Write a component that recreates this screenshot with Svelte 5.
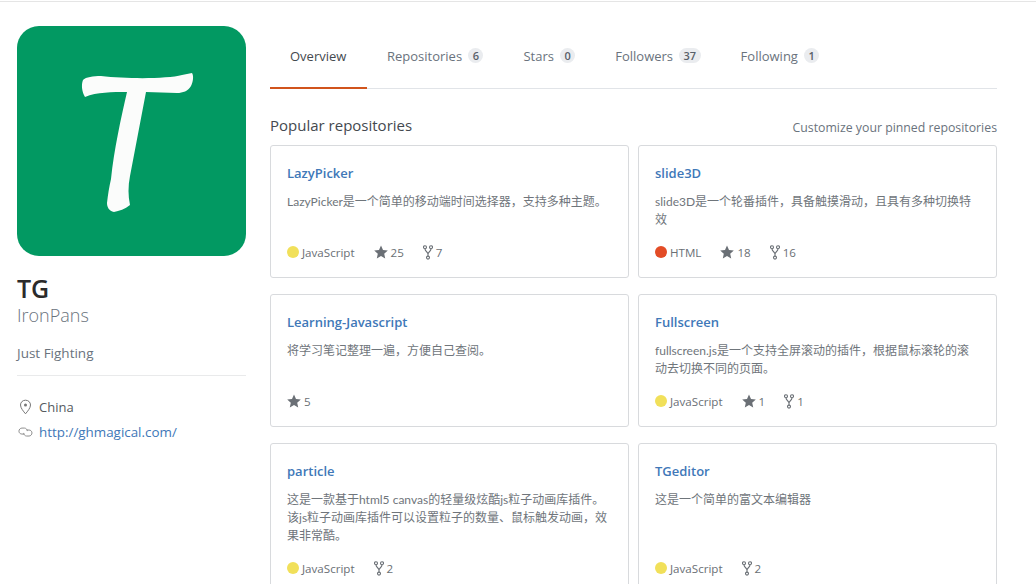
<script>
  const tabs = [
    { label: 'Overview', active: true },
    { label: 'Repositories', count: 6 },
    { label: 'Stars', count: 0 },
    { label: 'Followers', count: 37 },
    { label: 'Following', count: 1 }
  ];

  const repos = [
    { name: 'LazyPicker', desc: 'LazyPicker是一个简单的移动端时间选择器，支持多种主题。', lang: 'JavaScript', color: '#f1e05a', stars: 25, forks: 7 },
    { name: 'slide3D', desc: 'slide3D是一个轮番插件，具备触摸滑动，且具有多种切换特效', lang: 'HTML', color: '#e34c26', stars: 18, forks: 16 },
    { name: 'Learning-Javascript', desc: '将学习笔记整理一遍，方便自己查阅。', stars: 5 },
    { name: 'Fullscreen', desc: 'fullscreen.js是一个支持全屏滚动的插件，根据鼠标滚轮的滚动去切换不同的页面。', lang: 'JavaScript', color: '#f1e05a', stars: 1, forks: 1 },
    { name: 'particle', desc: '这是一款基于html5 canvas的轻量级炫酷js粒子动画库插件。该js粒子动画库插件可以设置粒子的数量、鼠标触发动画，效果非常酷。', lang: 'JavaScript', color: '#f1e05a', forks: 2 },
    { name: 'TGeditor', desc: '这是一个简单的富文本编辑器', lang: 'JavaScript', color: '#f1e05a', forks: 2 }
  ];
</script>

<div class="page">
  <aside class="side">
    <svg class="avatar" viewBox="0 0 229 230" aria-label="TG">
      <rect width="229" height="230" rx="22" fill="#029962" />
      <path fill="#fbfcfb" d="M66 54 C69 51 76 50 84 50 C110 53 150 53 165 49 L175 47 C177 50 176 56 174 60 C171 65 166 67 160 67 L129 66 L113 150 C111 160 111 170 113 179 C108 183 102 185 97 186 C92 185 90 181 90 177 C91 168 92 162 94 153 C97 124 104 92 110 66 C95 66 80 66 68 71 C65 66 64 59 66 54 Z" />
    </svg>
    <h1>TG</h1>
    <div class="login">IronPans</div>
    <div class="bio">Just Fighting</div>
    <ul class="meta">
      <li>
        <svg viewBox="0 0 14 16" width="15" height="16"><path fill="none" stroke="#777" d="M7 1.2c2.9 0 5 2.1 5 4.8 0 3-3 6.400-5 8.800C5 12.400 2 9 2 6c0-2.700 2.100-4.800 5-4.800z" /><circle cx="7" cy="6" r="1.500" fill="#777" /></svg>
        <span>China</span>
      </li>
      <li>
        <svg viewBox="0 0 16 12" width="15" height="12"><path fill="none" stroke="#888" d="M6.500 8.200H4.200C2.400 8.200 1 6.800 1 5.100S2.400 1.800 4.200 1.800h2.600c1.700 0 3.100 1.500 3.100 3.200" /><path fill="none" stroke="#888" d="M9.500 3.900h2.300c1.700 0 3.100 1.400 3.100 3.100s-1.400 3.300-3.100 3.300H9.200C7.500 10.300 6.100 8.800 6.100 7" /></svg>
        <a href="#top">http://ghmagical.com/</a>
      </li>
    </ul>
  </aside>

  <main class="main">
    <nav class="tabs">
      {#each tabs as tab}
        <a href="#top" class="tab" class:active={tab.active}>
          {tab.label}
          {#if tab.count !== undefined}<span class="count">{tab.count}</span>{/if}
        </a>
      {/each}
    </nav>

    <div class="head">
      <h2>Popular repositories</h2>
      <a href="#top">Customize your pinned repositories</a>
    </div>

    <div class="grid">
      {#each repos as repo}
        <article class="card">
          <a href="#top" class="name">{repo.name}</a>
          <p>{repo.desc}</p>
          <div class="stats">
            {#if repo.lang}
              <span class="lang"><i style:background={repo.color}></i>{repo.lang}</span>
            {/if}
            {#if repo.stars !== undefined}
              <span class="stat">
                <svg viewBox="0 0 14 14" width="14" height="14"><path fill="#6a6f75" d="M7 .6l2 4.400 4.800.5-3.600 3.200 1 4.700L7 11l-4.200 2.400 1-4.700L.2 5.500 5 5z" /></svg>
                {repo.stars}
              </span>
            {/if}
            {#if repo.forks !== undefined}
              <span class="stat">
                <svg viewBox="0 0 10 15" width="10" height="15"><g fill="none" stroke="#6a6f75" stroke-width="1.100"><circle cx="2" cy="2.200" r="1.500" /><circle cx="8" cy="2.200" r="1.500" /><circle cx="5" cy="12.600" r="1.500" /><path d="M2 3.700c0 3 3 3 3 5.500v2M8 3.700c0 3-3 3-3 5.500" /></g></svg>
                {repo.forks}
              </span>
            {/if}
          </div>
        </article>
      {/each}
    </div>
  </main>
</div>

<style>
  :global(body) {
    margin: 0;
    background: #fff;
    overflow: hidden;
  }

  .page {
    display: flex;
    gap: 24px;
    height: 582px;
    margin-top: 1px;
    padding-left: 17px;
    overflow: hidden;
    border-top: 1px solid #e5e5e5;
    font-family: "Open Sans", "Noto Sans CJK SC", sans-serif;
    color: #24292e;
  }

  .side {
    flex: 0 0 229px;
    width: 229px;
    padding-top: 24px;
  }

  .avatar {
    display: block;
    width: 229px;
    height: 230px;
  }

  h1 {
    margin: 16px 0 0;
    font-size: 25px;
    line-height: 32px;
    font-weight: 600;
    color: #2b2b2b;
  }

  .login {
    font-size: 18px;
    line-height: 22px;
    font-weight: 300;
    color: #6a737d;
  }

  .bio {
    margin-top: 17px;
    padding-bottom: 12px;
    border-bottom: 1px solid #e9eaeb;
    font-size: 13.5px;
    line-height: 20px;
    color: #6a737d;
  }

  .meta {
    margin: 18px 0 0;
    padding: 0;
    list-style: none;
    font-size: 13px;
    color: #555a60;
  }

  .meta li {
    display: flex;
    align-items: center;
    gap: 6px;
    height: 25px;
    padding-left: 1px;
  }

  .meta a {
    font-size: 13.4px;
    color: #4078b8;
    text-decoration: none;
  }

  .main {
    flex: 0 0 727px;
    width: 727px;
  }

  .tabs {
    display: flex;
    height: 62px;
    padding-top: 24px;
    border-bottom: 1px solid #e1e4e8;
  }

  .tab {
    display: flex;
    align-items: flex-start;
    gap: 6px;
    padding: 21px 20px 0;
    margin-bottom: -1px;
    font-size: 13px;
    line-height: 18px;
    color: #6a737d;
    text-decoration: none;
  }

  .tab.active {
    min-width: 57px;
    color: #44494f;
    border-bottom: 2px solid #d1541c;
  }

  .count {
    min-width: 6px;
    padding: 0 4.5px;
    border-radius: 9px;
    background: #eaecef;
    font-size: 11px;
    line-height: 15px;
    margin-top: 1px;
    font-weight: 600;
    color: #586069;
    text-align: center;
  }

  .head {
    display: flex;
    justify-content: space-between;
    align-items: flex-end;
    height: 56px;
  }

  h2 {
    margin: 0 0 10px;
    font-size: 15px;
    line-height: 20px;
    font-weight: 400;
    color: #44494f;
  }

  .head a {
    margin-bottom: 8px;
    font-size: 12.3px;
    line-height: 18px;
    color: #6a737d;
    text-decoration: none;
  }

  .grid {
    display: grid;
    grid-template-columns: 359px 359px;
    gap: 16px 9px;
  }

  .card {
    box-sizing: border-box;
    padding: 16px;
    border: 1px solid #d8dadd;
    border-radius: 3px;
    font-size: 11.6px;
    color: #6a6f75;
    display: flex;
    flex-direction: column;
  }

  .name {
    font-size: 13px;
    line-height: 22px;
    font-weight: 600;
    color: #4078b8;
    text-decoration: none;
  }

  p {
    flex: 1;
    min-height: 36px;
    margin: 9px 0 14px;
    font-family: Lato, "Noto Sans CJK SC", sans-serif;
    font-size: 12px;
    line-height: 18px;
    color: #6f757b;
  }

  .stats {
    display: flex;
    align-items: center;
    gap: 19px;
    height: 18px;
  }

  .lang {
    display: flex;
    align-items: center;
    gap: 3px;
  }

  .lang i {
    width: 12px;
    height: 12px;
    border-radius: 50%;
  }

  .stat {
    display: flex;
    align-items: center;
    gap: 3px;
  }
</style>
